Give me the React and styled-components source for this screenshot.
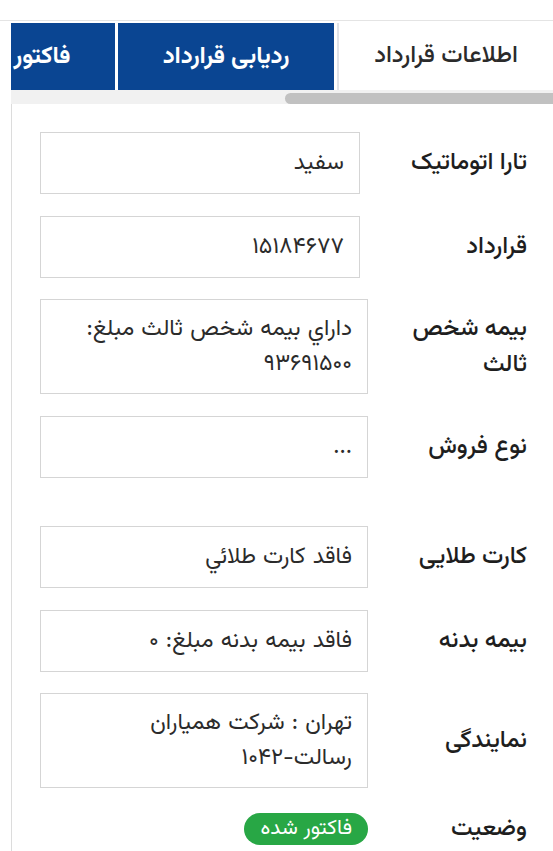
import styled, { createGlobalStyle } from 'styled-components';

const GlobalStyle = createGlobalStyle`
  html, body {
    margin: 0;
    padding: 0;
    background: #fff;
  }
  body {
    font-family: 'Vazirmatn', 'Noto Sans Arabic', 'DejaVu Sans', sans-serif;
    color: #212529;
  }
  * {
    box-sizing: border-box;
  }
`;

const rows = [
  { label: 'تارا اتوماتیک', value: 'سفید', col: 167 },
  { label: 'قرارداد', value: '۱۵۱۸۴۶۷۷', col: 167, gap: 21 },
  { label: ['بیمه شخص', 'ثالث'], value: ['داراي بيمه شخص ثالث مبلغ:', '۹۳۶۹۱۵۰۰'], col: 159 },
  { label: 'نوع فروش', value: '...', col: 159, gap: 48 },
  { label: 'کارت طلایی', value: 'فاقد کارت طلائي', col: 159 },
  { label: 'بیمه بدنه', value: 'فاقد بیمه بدنه مبلغ: ۰', col: 159, gap: 21 },
  { label: 'نمایندگی', value: ['تهران : شرکت همیاران', 'رسالت-۱۰۴۲'], col: 159, gap: 23 },
];

const Lines = ({ text }) =>
  Array.isArray(text) ? text.map(line => <div key={line}>{line}</div>) : text;

const App = () => {
  return (
    <Page dir="rtl">
      <GlobalStyle />
      <TopBar />
      <TabStrip>
        <Tab $w={216}>اطلاعات قرارداد</Tab>
        <Tab $w={216} $active>ردیابی قرارداد</Tab>
        <Tab $w={146} $active>فاکتور</Tab>
      </TabStrip>
      <ScrollTrack>
        <ScrollThumb />
      </ScrollTrack>
      <Panel>
        {rows.map(row => (
          <Row key={row.col + String(row.label)} $col={row.col} $gap={row.gap}>
            <Label>
              <Lines text={row.label} />
            </Label>
            <ValueBox $multi={Array.isArray(row.value)}>
              <Lines text={row.value} />
            </ValueBox>
          </Row>
        ))}
        <Row $col={159} $gap={0}>
          <Label>وضعیت</Label>
          <Badge>فاکتور شده</Badge>
        </Row>
      </Panel>
    </Page>
  );
};
export default App;

const Page = styled.div`
  width: 553px;
  min-height: 851px;
  overflow: hidden;
`;

const TopBar = styled.div`
  height: 21px;
  border-bottom: 1px solid #e4e4e4;
`;

const TabStrip = styled.div`
  display: flex;
  gap: 3px;
  margin: 2px 0 0 11px;
  height: 67px;
  overflow: hidden;
`;

const Tab = styled.div`
  flex: 0 0 ${({ $w }) => $w}px;
  display: flex;
  align-items: center;
  justify-content: center;
  font-size: 24px;
  font-weight: ${({ $active }) => ($active ? 700 : 500)};
  white-space: nowrap;
  color: ${({ $active }) => ($active ? '#fff' : '#2b2b2b')};
  background: ${({ $active }) => ($active ? '#0a4592' : '#fff')};
  border-left: ${({ $active }) => ($active ? 'none' : '2px solid #dfe3e8')};
  border-top: ${({ $active }) => ($active ? 'none' : '1px solid #e4e4e4')};
  margin-top: ${({ $active }) => ($active ? 0 : -2)}px;
`;

const ScrollTrack = styled.div`
  display: flex;
  align-items: flex-end;
  margin-left: 11px;
  height: 14px;
  background: #f1f1f1;
`;

const ScrollThumb = styled.div`
  width: 268px;
  height: 11px;
  border-radius: 6px 0 0 6px;
  background: #c1c1c1;
`;

const Panel = styled.div`
  margin-left: 11px;
  border-left: 1px solid #dcdcdc;
  padding: 28px 26px 40px 28px;
`;

const Row = styled.div`
  display: grid;
  grid-template-columns: ${({ $col }) => $col}px 1fr;
  align-items: center;
  margin-bottom: ${({ $gap }) => $gap ?? 22}px;
`;

const Label = styled.div`
  font-size: 24px;
  font-weight: 500;
  line-height: 36px;
  color: #1e1e1e;
`;

const ValueBox = styled.div`
  display: flex;
  flex-direction: column;
  justify-content: center;
  height: ${({ $multi }) => ($multi ? 95 : 62)}px;
  border: 1px solid #d5d5d5;
  padding: 0 15px;
  font-size: 23px;
  line-height: ${({ $multi }) => ($multi ? 35 : 32)}px;
  word-spacing: 1px;
  color: #2b2b2b;
`;

const Badge = styled.div`
  justify-self: start;
  height: 32px;
  padding: 0 16px;
  border-radius: 16px;
  background: #28a745;
  color: #fff;
  font-size: 21px;
  line-height: 32px;
  white-space: nowrap;
`;
